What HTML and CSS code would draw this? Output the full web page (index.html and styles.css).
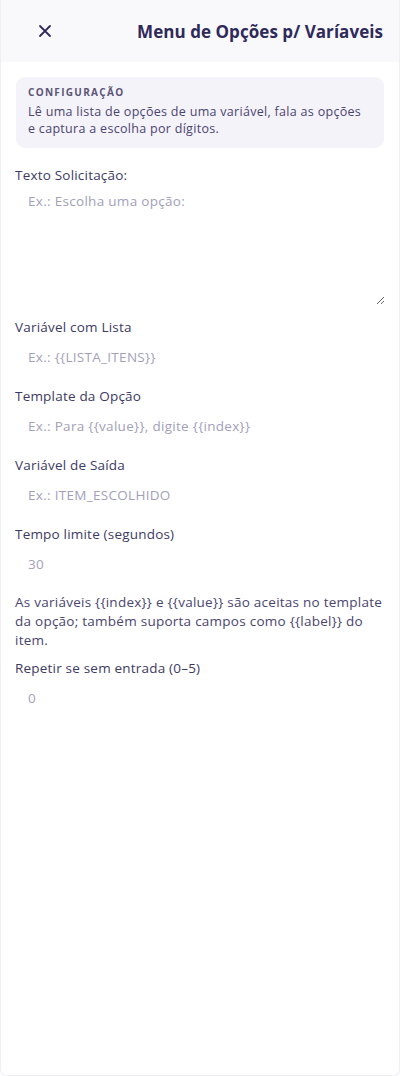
FILE: index.html
```html
<!DOCTYPE html>
<html lang="pt">
<head>
<meta charset="utf-8">
<link rel="stylesheet" href="styles.css">
</head>
<body>
<div class="panel">
  <header class="head">
    <button class="close" aria-label="Fechar">
      <svg width="14" height="14" viewBox="0 0 14 14"><path d="M2 2L12 12M12 2L2 12" stroke="#2f2a5a" stroke-width="1.8" stroke-linecap="round"/></svg>
    </button>
    <h1 class="title">Menu de Opções p/ Varíaveis</h1>
  </header>
  <main class="body">
    <section class="info">
      <div class="info-kicker">CONFIGURAÇÃO</div>
      <p class="info-text">Lê uma lista de opções de uma variável, fala as opções e captura a escolha por dígitos.</p>
    </section>
    <label class="field first">
      <span class="label">Texto Solicitação:</span>
      <textarea class="input area" placeholder="Ex.: Escolha uma opção:"></textarea>
    </label>
    <label class="field">
      <span class="label">Variável com Lista</span>
      <input class="input" placeholder="Ex.: {{LISTA_ITENS}}">
    </label>
    <label class="field">
      <span class="label">Template da Opção</span>
      <input class="input" placeholder="Ex.: Para {{value}}, digite {{index}}">
    </label>
    <label class="field">
      <span class="label">Variável de Saída</span>
      <input class="input" placeholder="Ex.: ITEM_ESCOLHIDO">
    </label>
    <label class="field">
      <span class="label">Tempo limite (segundos)</span>
      <input class="input" placeholder="30">
    </label>
    <p class="help">As variáveis {{index}} e {{value}} são aceitas no template da opção; também suporta campos como {{label}} do item.</p>
    <label class="field">
      <span class="label">Repetir se sem entrada (0–5)</span>
      <input class="input" placeholder="0">
    </label>
  </main>
</div>
</body>
</html>
```
FILE: styles.css
```css
* { box-sizing: border-box; }
html, body { margin: 0; padding: 0; background: #ffffff; }
body { font-family: "Open Sans", "Liberation Sans", sans-serif; color: #3d3a63; }
.panel {
  width: 400px;
  height: 1076px;
  border: 1px solid #f0eff4;
  border-top: none;
  border-radius: 0 0 6px 6px;
  background: #fff;
  display: flex;
  flex-direction: column;
}
.head {
  height: 62px;
  background: #f9f9fc;
  display: flex;
  align-items: center;
  justify-content: space-between;
  padding: 0 16px 0 36px;
}
.close {
  border: none;
  background: none;
  padding: 0;
  width: 16px;
  height: 16px;
  display: flex;
  align-items: center;
  justify-content: center;
}
.title {
  margin: 0;
  font-size: 17px;
  font-weight: 700;
  color: #2f2a5a;
  letter-spacing: 0.05px;
}
.body {
  padding: 15px 14px 0 14px;
  display: flex;
  flex-direction: column;
}
.info {
  margin: 0 1px 17px 1px;
  background: #f5f3fa;
  border-radius: 9px;
  padding: 8px 16px 11px 12px;
}
.info-kicker {
  font-size: 10px;
  font-weight: 700;
  letter-spacing: 1.3px;
  color: #5b5677;
  line-height: 14px;
}
.info-text {
  margin: 4px 0 0 0;
  font-size: 12.5px;
  line-height: 17px;
  color: #4a4570;
  letter-spacing: 0.3px;
}
.field {
  display: flex;
  flex-direction: column;
  gap: 4px;
  margin-bottom: 13px;
}
.field.first { margin-bottom: 12px; }
.label {
  font-size: 13.5px;
  line-height: 20px;
  color: #3d3a63;
  letter-spacing: 0.2px;
}
.input {
  font-family: inherit;
  font-size: 13.5px;
  color: #3d3a63;
  border: none;
  outline: none;
  background: transparent;
  height: 32px;
  padding: 0 13px;
  letter-spacing: 0.3px;
}
.input::placeholder { color: #a29fb9; }
.area {
  height: 116px;
  padding: 3px 13px;
  line-height: 18px;
  resize: vertical;
}
.help {
  margin: 0 0 8px 0;
  font-size: 13.5px;
  line-height: 19px;
  color: #4a4570;
  letter-spacing: 0.25px;
}
```
